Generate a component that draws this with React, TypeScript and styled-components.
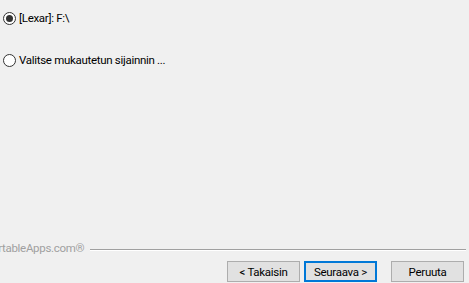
import styled, { createGlobalStyle } from "styled-components";

const Global = createGlobalStyle`
  html, body {
    margin: 0;
    padding: 0;
    background: #f0f0f0;
  }
  body {
    font-family: "Segoe UI", Roboto, "Liberation Sans", sans-serif;
    font-size: 11.5px;
    letter-spacing: -0.3px;
    color: #000;
  }
`;

const Page = styled.div`
  width: 469px;
  height: 283px;
  display: flex;
  flex-direction: column;
  overflow: hidden;
  background: #f0f0f0;
`;

const Options = styled.div`
  display: flex;
  flex-direction: column;
  gap: 26px;
  padding: 10px 0 0 3px;
  flex: 1;
`;

const Option = styled.label`
  display: flex;
  align-items: center;
  gap: 3px;
  height: 16px;
  line-height: 16px;
`;

const Dot = styled.span<{ $checked?: boolean }>`
  width: 11px;
  height: 11px;
  border: 1px solid #333;
  border-radius: 50%;
  background: #fff;
  display: flex;
  align-items: center;
  justify-content: center;
  flex-shrink: 0;
  &::after {
    content: "";
    display: ${(p) => (p.$checked ? "block" : "none")};
    width: 7px;
    height: 7px;
    border-radius: 50%;
    background: #333;
  }
`;

const Brand = styled.div`
  display: flex;
  align-items: center;
  gap: 6px;
  height: 16px;
  padding-right: 3px;
  margin-bottom: 5px;
`;

const BrandText = styled.span`
  color: #a0a0a0;
  margin-left: -15px;
  white-space: nowrap;
`;

const Rule = styled.div`
  flex: 1;
  height: 1px;
  background: #a0a0a0;
  box-shadow: 0 1px 0 #fff;
  margin-top: 2px;
`;

const Buttons = styled.div`
  display: flex;
  justify-content: flex-end;
  gap: 4px;
  padding: 0 5px 1px 0;
`;

const Button = styled.button<{ $primary?: boolean; $gap?: number }>`
  width: 73px;
  height: 21px;
  padding: 0;
  font: inherit;
  letter-spacing: inherit;
  color: #000;
  background: #e1e1e1;
  border: 1px solid ${(p) => (p.$primary ? "#0078d7" : "#adadad")};
  box-shadow: ${(p) => (p.$primary ? "inset 0 0 0 1px #0078d7" : "none")};
  margin-left: ${(p) => p.$gap ?? 0}px;
`;

export default function App() {
  return (
    <Page>
      <Global />
      <Options>
        <Option>
          <Dot $checked />
          [Lexar]: F:\
        </Option>
        <Option>
          <Dot />
          Valitse mukautetun sijainnin ...
        </Option>
      </Options>
      <Brand>
        <BrandText>PortableApps.com®</BrandText>
        <Rule />
      </Brand>
      <Buttons>
        <Button>&lt; Takaisin</Button>
        <Button $primary>Seuraava &gt;</Button>
        <Button $gap={10}>Peruuta</Button>
      </Buttons>
    </Page>
  );
}
